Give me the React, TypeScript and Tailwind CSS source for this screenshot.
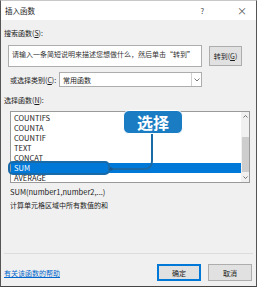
import React from "react";

const items = ["COUNTIFS", "COUNTA", "COUNTIF", "TEXT", "CONCAT", "SUM", "AVERAGE"];

const font = {
  fontFamily: '"Noto Sans CJK SC", "Noto Sans", sans-serif',
};

export default function App() {
  return (
    <div className="w-[261px] h-[290px] bg-white" style={font}>
      <div className="relative w-[257px] h-[287px] border-x border-b border-t border-x-[#555] border-b-[#444] border-t-[#c8c8c8] bg-[#f0f0f0] text-[7px] leading-[10px] text-[#1a1a1a] flex flex-col whitespace-nowrap">
        {/* title bar */}
        <div className="h-[19px] bg-white flex items-center pl-[4px] text-[7.5px]">
          <span>插入函数</span>
          <span className="ml-auto mr-[33px] text-[#444]">?</span>
          <span className="mr-[9px] text-[10px] text-[#555]">×</span>
        </div>

        {/* search */}
        <div className="mt-[8px] ml-[3px] h-[10px]">
          搜索函数(<span className="underline">S</span>):
        </div>
        <div className="mt-[7px] flex items-center">
          <div className="ml-[7px] w-[194px] h-[22px] bg-white border border-[#adadad] px-[3px] pt-[3px] text-[#333] overflow-hidden">
            请输入一条简短说明来描述您想做什么，然后单击“转到”
          </div>
          <div className="ml-[7px] w-[33px] h-[20px] bg-[#e1e1e1] border border-[#adadad] flex items-center justify-center">
            转到(<span className="underline">G</span>)
          </div>
        </div>

        {/* category */}
        <div className="mt-[5px] flex items-center h-[15px]">
          <span className="ml-[9px] w-[49px]">
            或选择类别(<span className="underline">C</span>):
          </span>
          <div className="w-[143px] h-[15px] bg-white border border-[#adadad] flex items-center">
            <span className="pl-[3px]">常用函数</span>
            <div className="ml-auto h-full w-[10px] border-l border-[#d0d0d0] flex items-center justify-center">
              <svg width="6" height="4" viewBox="0 0 6 4">
                <path d="M0.5 0.5 L3 3 L5.5 0.5" fill="none" stroke="#555" strokeWidth="0.8" />
              </svg>
            </div>
          </div>
        </div>

        {/* function list */}
        <div className="mt-[8px] ml-[3px] h-[10px]">
          选择函数(<span className="underline">N</span>):
        </div>
        <div className="mt-[6px] ml-[9px] w-[240px] h-[72px] bg-white border border-[#9a9a9a] flex overflow-hidden text-[7.5px]">
          <div className="flex-1 pt-[1px]">
            {items.map((it) => (
              <div
                key={it}
                className={
                  it === "SUM"
                    ? "h-[10px] pl-[3px] bg-[#0078d7] text-white"
                    : "h-[10px] pl-[3px]"
                }
              >
                {it}
              </div>
            ))}
          </div>
          <div className="w-[8px] bg-[#f0f0f0] flex flex-col items-center">
            <div className="h-[10px] flex items-center">
              <svg width="5" height="3" viewBox="0 0 5 3">
                <path d="M0.5 2.5 L2.5 0.5 L4.5 2.5" fill="none" stroke="#555" strokeWidth="0.8" />
              </svg>
            </div>
            <div className="mt-[15px] w-[7px] h-[36px] bg-[#cdcdcd]" />
            <div className="mt-auto h-[10px] flex items-center">
              <svg width="5" height="3" viewBox="0 0 5 3">
                <path d="M0.5 0.5 L2.5 2.5 L4.5 0.5" fill="none" stroke="#555" strokeWidth="0.8" />
              </svg>
            </div>
          </div>
        </div>

        {/* description */}
        <div className="mt-[4px] ml-[9px] h-[10px] text-[7.5px]">SUM(number1,number2,...)</div>
        <div className="mt-[3px] ml-[9px] h-[10px]">计算单元格区域中所有数值的和</div>

        {/* footer */}
        <div className="mt-[43px] mx-[3px] h-px bg-[#dcdcdc]" />
        <div className="mt-[10px] flex items-center h-[17px]">
          <span className="ml-[3px] text-[#0066cc] underline">有关该函数的帮助</span>
          <div className="ml-auto w-[44px] h-[17px] bg-[#e1e1e1] border-2 border-[#0078d7] flex items-center justify-center">
            确定
          </div>
          <div className="ml-[7px] mr-[4px] w-[44px] h-[17px] bg-[#e1e1e1] border border-[#adadad] flex items-center justify-center">
            取消
          </div>
        </div>

        {/* callout overlay */}
        <div className="absolute left-[7px] top-[160px] w-[102px] h-[14px] rounded-[5px] border-2 border-[#1a6aa8]" />
        <svg className="absolute left-0 top-0" width="257" height="287" viewBox="0 0 257 287">
          <path
            d="M151 132 L151 160 Q151 168 143 168 L110 168"
            fill="none"
            stroke="#1a6aa8"
            strokeWidth="2"
          />
          <circle cx="110" cy="168" r="1.8" fill="#1a5a90" />
        </svg>
        <div className="absolute left-[122px] top-[109px] w-[60px] h-[24px] rounded-[6px] bg-[#1a7cc2] border border-white flex items-center justify-center text-white text-[16px] font-bold leading-none">
          选择
        </div>
      </div>
    </div>
  );
}
